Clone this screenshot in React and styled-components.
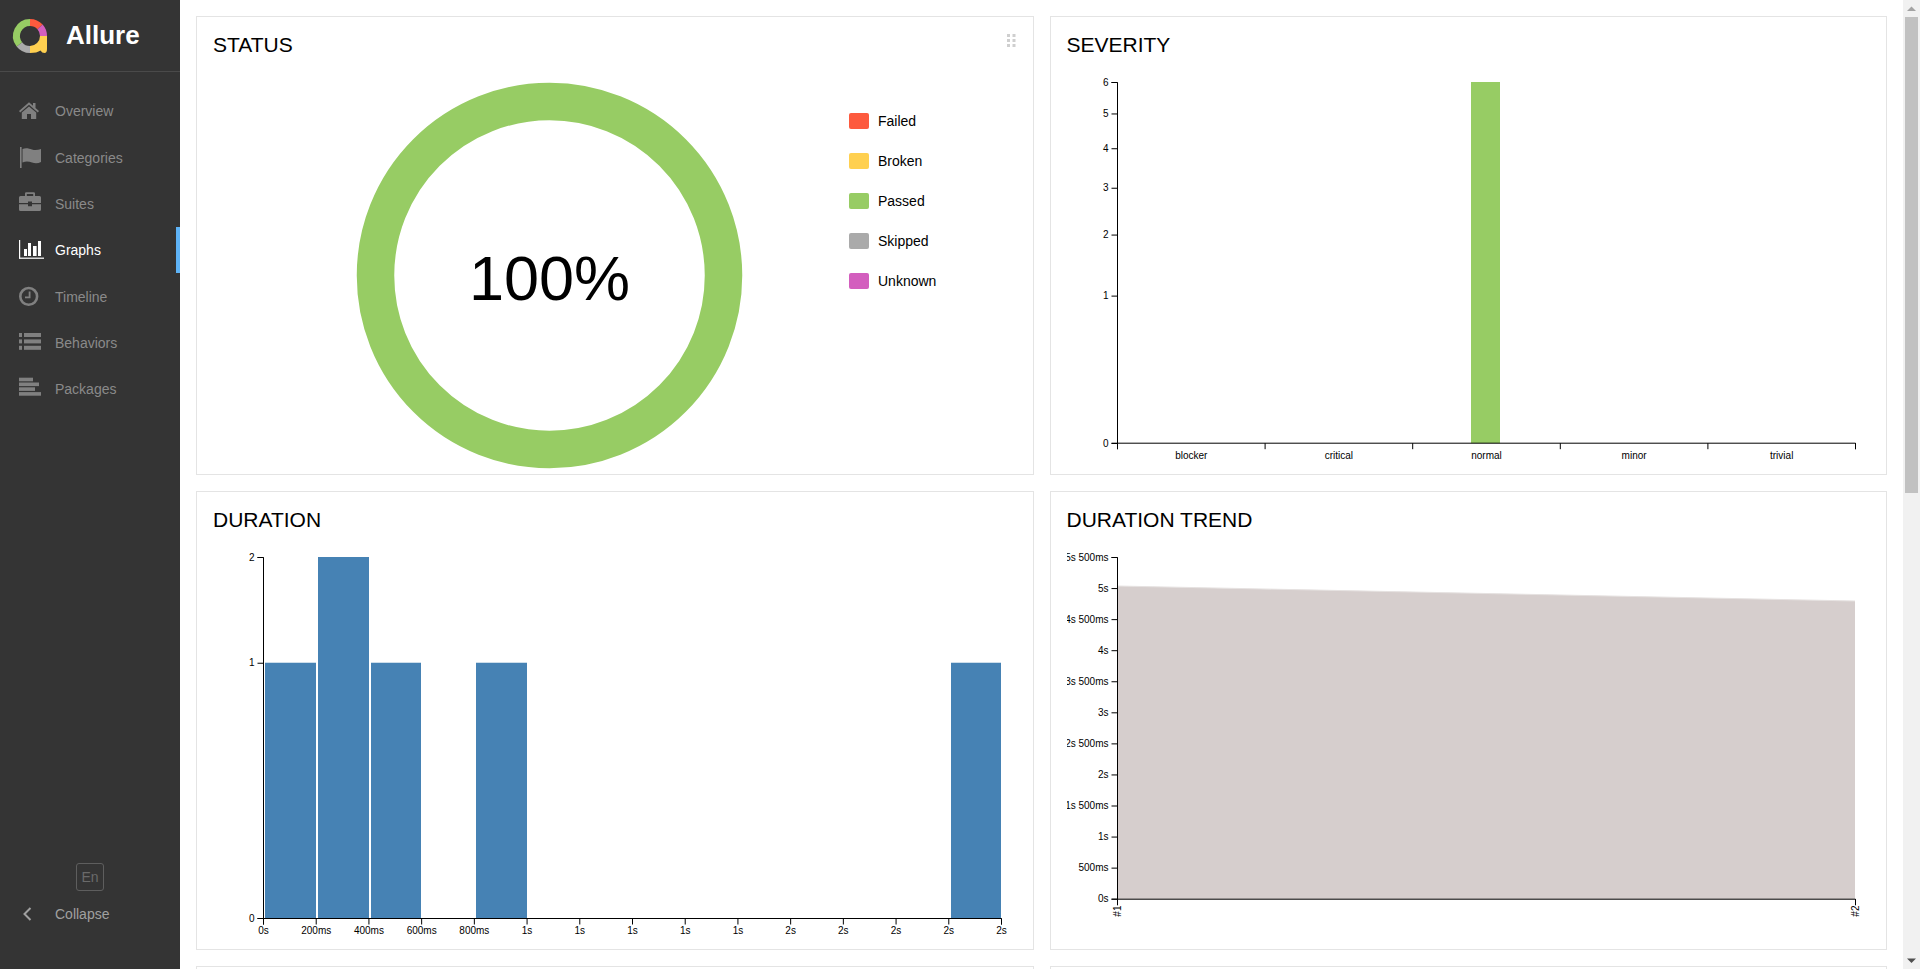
import React from "react";
import styled, { createGlobalStyle } from "styled-components";

const navItems = [
  { label: "Overview", icon: "home" },
  { label: "Categories", icon: "flag" },
  { label: "Suites", icon: "briefcase" },
  { label: "Graphs", icon: "chart", active: true },
  { label: "Timeline", icon: "clock" },
  { label: "Behaviors", icon: "list" },
  { label: "Packages", icon: "lines" },
];

const legend = [
  { label: "Failed", color: "#fd5a3e" },
  { label: "Broken", color: "#ffd050" },
  { label: "Passed", color: "#97cc64" },
  { label: "Skipped", color: "#aaaaaa" },
  { label: "Unknown", color: "#d35ebe" },
];

const AXIS_LEFT = 50.5;
const AXIS_RIGHT = 788.5;
const AXIS_TOP = 10.5;
const AXIS_HEIGHT = 361;

const sqrtY = (value, max) =>
  AXIS_TOP + AXIS_HEIGHT * (1 - Math.sqrt(value / max));

const severityLabels = ["blocker", "critical", "normal", "minor", "trivial"];
const durationLabels = ["0s", "200ms", "400ms", "600ms", "800ms", "1s", "1s", "1s", "1s", "1s", "2s", "2s", "2s", "2s", "2s"];
const durationBars = [
  { x: 52, w: 51, top: 1 },
  { x: 105, w: 51, top: 2 },
  { x: 158, w: 50, top: 1 },
  { x: 263, w: 51, top: 1 },
  { x: 738, w: 50, top: 1 },
];
const trendLabels = ["0s", "500ms", "1s", "1s 500ms", "2s", "2s 500ms", "3s", "3s 500ms", "4s", "4s 500ms", "5s", "5s 500ms"];

const polar = (r, deg) => {
  const a = ((deg - 90) * Math.PI) / 180;
  return `${30 + r * Math.cos(a)} ${36 + r * Math.sin(a)}`;
};
const arc = (from, to) => `M${polar(13.5, from)} A13.5 13.5 0 ${to - from > 180 ? 1 : 0} 1 ${polar(13.5, to)}`;

const Logo = () => (
  <LogoSvg viewBox="10 16 40 40">
    <g fill="none" strokeWidth="7">
      <path d={arc(0, 48)} stroke="#fd5a3e" />
      <path d={arc(48, 90)} stroke="#d35ebe" />
      <path d={arc(180, 232)} stroke="#aaaaaa" />
      <path d={arc(232, 360)} stroke="#97cc64" />
    </g>
    <path
      d="M47 36 V49 Q47 53 44.5 53 Q42 53 40.5 50.5 Q37 53 30 53 V46 A10 10 0 0 0 40 36 Z"
      fill="#ffd050"
    />
  </LogoSvg>
);

const NavIcon = ({ name }) => {
  if (name === "home") {
    return (
      <IconSvg viewBox="0 0 24 24">
        <path d="M12 3.2 L2 12 L3.2 13.4 L12 5.8 L20.8 13.4 L22 12 L18.5 9 V4 H16 V6.7 Z" />
        <path d="M12 7.4 L4.8 13.6 V20 H10 V15 H14 V20 H19.2 V13.6 Z" />
      </IconSvg>
    );
  }
  if (name === "flag") {
    return (
      <IconSvg viewBox="0 0 24 24">
        <rect x="3" y="1" width="1.6" height="21" />
        <path d="M5.5 3 C9 1.5 12 2.5 15 3.5 C18 4.5 21 4 24 3 V16 C21 17.5 18 17.5 15 16.5 C12 15.5 9 15 5.5 16.5 Z" />
      </IconSvg>
    );
  }
  if (name === "briefcase") {
    return (
      <IconSvg viewBox="0 1 24 24">
        <path d="M8 5 V2.5 Q8 1.2 9.3 1.2 H16.7 Q18 1.2 18 2.5 V5 H16.2 V3 H9.8 V5 Z" />
        <path d="M2 6.5 Q2 5 3.5 5 H22.5 Q24 5 24 6.5 V12 H15 V10.5 H11 V12 H2 Z" />
        <path d="M2 13.3 H11 V15.2 H15 V13.3 H24 V18.5 Q24 20 22.5 20 H3.5 Q2 20 2 18.5 Z" />
      </IconSvg>
    );
  }
  if (name === "chart") {
    return (
      <IconSvg viewBox="0 0 24 24" $active>
        <rect x="2" y="2" width="1.2" height="18.5" />
        <rect x="2" y="19.6" width="25" height="1.2" />
        <rect x="7" y="11" width="3" height="7" />
        <rect x="11" y="5" width="3" height="13" />
        <rect x="16" y="8" width="3.6" height="10" />
        <rect x="21" y="3" width="3" height="15" />
      </IconSvg>
    );
  }
  if (name === "clock") {
    return (
      <IconSvg viewBox="0 0 24 24">
        <circle cx="11.7" cy="11.4" r="8.4" fill="none" stroke="#808080" strokeWidth="2.6" />
        <path d="M12.6 6.4 V12.4 H8" fill="none" stroke="#808080" strokeWidth="1.8" />
      </IconSvg>
    );
  }
  if (name === "list") {
    return (
      <IconSvg viewBox="0 0 24 24">
        {[2, 8.4, 14.8].map((y) => (
          <g key={y}>
            <rect x="2" y={y} width="3" height="4" />
            <rect x="7" y={y} width="17" height="4" />
          </g>
        ))}
      </IconSvg>
    );
  }
  return (
    <IconSvg viewBox="0 0 24 24">
      <rect x="2" y="0.7" width="14" height="3.6" />
      <rect x="2" y="5.5" width="20" height="3.6" />
      <rect x="2" y="10.3" width="16" height="3.6" />
      <rect x="2" y="15.1" width="22" height="3.6" />
    </IconSvg>
  );
};

const LeftAxis = ({ ticks, bottom }) => (
  <g>
    <Domain d={`M${AXIS_LEFT - 6} ${AXIS_TOP} H${AXIS_LEFT} V${bottom} H${AXIS_LEFT - 6}`} />
    {ticks.map((tick) => (
      <g key={tick.label}>
        <Tick x1={AXIS_LEFT - 6} x2={AXIS_LEFT} y1={tick.y} y2={tick.y} />
        <AxisText x={AXIS_LEFT - 9} y={tick.y} dy=".32em" textAnchor="end">
          {tick.label}
        </AxisText>
      </g>
    ))}
  </g>
);

const BottomAxis = ({ y, ticks }) => (
  <g>
    <Domain d={`M${AXIS_LEFT} ${y + 6} V${y} H${AXIS_RIGHT} V${y + 6}`} />
    {ticks.map((x) => (
      <Tick key={x} x1={x} x2={x} y1={y} y2={y + 6} />
    ))}
  </g>
);

const StatusChart = () => (
  <StatusBody>
    <DonutSvg>
      <circle cx="336.5" cy="203.5" r="174" fill="none" stroke="#97cc64" strokeWidth="37.5" />
      <DonutText x="336.5" y="228" textAnchor="middle">100%</DonutText>
    </DonutSvg>
    <Legend>
      {legend.map((item) => (
        <LegendRow key={item.label}>
          <Swatch $color={item.color} />
          {item.label}
        </LegendRow>
      ))}
    </Legend>
  </StatusBody>
);

const SeverityChart = () => {
  const band = (AXIS_RIGHT - AXIS_LEFT) / 5;
  const ticks = [6, 5, 4, 3, 2, 1, 0].map((v) => ({ label: String(v), y: sqrtY(v, 6) }));
  return (
    <ChartSvg>
      <rect x="404" y="10" width="29" height="361.2" fill="#97cc64" />
      <LeftAxis ticks={ticks} bottom={371.2} />
      <BottomAxis y={371.2} ticks={[0, 1, 2, 3, 4, 5].map((i) => AXIS_LEFT + band * i)} />
      {severityLabels.map((label, i) => (
        <AxisText key={label} x={AXIS_LEFT + band * (i + 0.5)} y="380" dy=".71em" textAnchor="middle">
          {label}
        </AxisText>
      ))}
    </ChartSvg>
  );
};

const DurationChart = () => {
  const step = (AXIS_RIGHT - AXIS_LEFT) / 14;
  const ticks = [2, 1, 0].map((v) => ({ label: String(v), y: sqrtY(v, 2) }));
  return (
    <ChartSvg>
      {durationBars.map((bar) => (
        <rect
          key={bar.x}
          x={bar.x}
          y={sqrtY(bar.top, 2) - 0.5}
          width={bar.w}
          height={371.5 - sqrtY(bar.top, 2) + 0.5}
          fill="#4682b4"
        />
      ))}
      <LeftAxis ticks={ticks} bottom={371.5} />
      <BottomAxis y={371.5} ticks={durationLabels.map((_, i) => AXIS_LEFT + step * i)} />
      {durationLabels.map((label, i) => (
        <AxisText key={i} x={AXIS_LEFT + step * i} y="380" dy=".71em" textAnchor="middle">
          {label}
        </AxisText>
      ))}
    </ChartSvg>
  );
};

const DurationTrendChart = () => {
  const bottom = 352.2;
  const pitch = (bottom - AXIS_TOP) / 11;
  const ticks = trendLabels.map((label, i) => ({ label, y: bottom - pitch * i }));
  return (
    <ChartSvg>
      <path d={`M${AXIS_LEFT} 39 L788 54 V${bottom} H${AXIS_LEFT} Z`} fill="#d6cecd" />
      <path d={`M${AXIS_LEFT} 39 L788 54`} stroke="#e6e2e1" fill="none" />
      <LeftAxis ticks={ticks} bottom={bottom} />
      <BottomAxis y={bottom} ticks={[AXIS_LEFT, AXIS_RIGHT]} />
      {["#1", "#2"].map((label, i) => (
        <AxisText
          key={label}
          transform={`translate(${(i ? AXIS_RIGHT : AXIS_LEFT) + 3.5} 358.5) rotate(-90)`}
          textAnchor="end"
        >
          {label}
        </AxisText>
      ))}
    </ChartSvg>
  );
};

const App = () => {
  return (
    <Page>
      <GlobalStyle />
      <SideNav>
        <Brand>
          <Logo />
          <BrandName>Allure</BrandName>
        </Brand>
        <Menu>
          {navItems.map((item) => (
            <MenuItem key={item.label} $active={item.active}>
              <NavIcon name={item.icon} />
              {item.label}
            </MenuItem>
          ))}
        </Menu>
        <Footer>
          <LangButton>En</LangButton>
          <Collapse>
            <CollapseIcon viewBox="0 0 24 24">
              <path d="M11.5 6 L5.5 12 L11.5 18" />
            </CollapseIcon>
            Collapse
          </Collapse>
        </Footer>
      </SideNav>
      <Content>
        <Card>
          <CardTitle>Status</CardTitle>
          <Handle viewBox="0 0 9 13">
            {[0, 5, 10].map((y) => (
              <g key={y}>
                <rect x="0" y={y} width="3" height="3" />
                <rect x="5.5" y={y} width="3" height="3" />
              </g>
            ))}
          </Handle>
          <StatusChart />
        </Card>
        <Card>
          <CardTitle>Severity</CardTitle>
          <SeverityChart />
        </Card>
        <Card>
          <CardTitle>Duration</CardTitle>
          <DurationChart />
        </Card>
        <Card>
          <CardTitle>Duration trend</CardTitle>
          <DurationTrendChart />
        </Card>
        <Card>
          <CardTitle>Retries trend</CardTitle>
          <EmptyChart $height={400} />
        </Card>
        <Card>
          <CardTitle>Categories trend</CardTitle>
          <EmptyChart $height={400} />
        </Card>
        <Card>
          <CardTitle>History trend</CardTitle>
          <EmptyChart $height={387} />
        </Card>
        <Card>
          <CardTitle>Executors</CardTitle>
          <EmptyChart $height={387} />
        </Card>
      </Content>
      <ScrollRail>
        <ScrollButton viewBox="0 0 17 17" $color="#a3a3a3">
          <path d="M4 11 L8.5 6.5 L13 11 Z" />
        </ScrollButton>
        <ScrollThumb />
        <ScrollButton viewBox="0 0 17 17" $color="#505050" $bottom>
          <path d="M4 6.5 L13 6.5 L8.5 11 Z" />
        </ScrollButton>
      </ScrollRail>
    </Page>
  );
};

const GlobalStyle = createGlobalStyle`
  html {
    scrollbar-width: none;
  }
  body {
    margin: 0;
    background: #fff;
    color: #000;
    font-family: "Liberation Sans", Arial, sans-serif;
    font-size: 14px;
  }
`;

const Page = styled.div`
  display: flex;
  align-items: flex-start;
`;

const SideNav = styled.nav`
  position: sticky;
  top: 0;
  flex: 0 0 180px;
  height: 100vh;
  display: flex;
  flex-direction: column;
  background: #343434;
  color: #808080;
`;

const Brand = styled.div`
  display: flex;
  align-items: center;
  height: 71px;
  padding-left: 10px;
  gap: 16px;
  border-bottom: 1px solid #4a4a4a;
`;

const LogoSvg = styled.svg`
  width: 40px;
  height: 40px;
  flex: none;
`;

const BrandName = styled.span`
  color: #fff;
  font-size: 26px;
  font-weight: bold;
`;

const Menu = styled.div`
  margin-top: 16.1px;
`;

const MenuItem = styled.div`
  display: flex;
  align-items: center;
  gap: 14px;
  height: 46.33px;
  padding-left: 17px;
  box-sizing: border-box;
  color: ${(props) => (props.$active ? "#fff" : "#8a8a8a")};
  border-right: 4px solid ${(props) => (props.$active ? "#5eb3f6" : "transparent")};
`;

const IconSvg = styled.svg`
  width: 24px;
  height: 24px;
  flex: none;
  overflow: visible;
  fill: ${(props) => (props.$active ? "#fff" : "#808080")};
`;

const Footer = styled.div`
  margin-top: auto;
  padding-bottom: 32px;
`;

const LangButton = styled.div`
  box-sizing: border-box;
  width: 28px;
  height: 28px;
  margin: 0 auto;
  display: flex;
  align-items: center;
  justify-content: center;
  border: 1px solid #5e5e5e;
  border-radius: 3px;
  color: #6a6a6a;
`;

const Collapse = styled.div`
  display: flex;
  align-items: center;
  gap: 14px;
  height: 46px;
  padding-left: 17px;
  color: #a0a0a0;
`;

const CollapseIcon = styled.svg`
  width: 24px;
  height: 24px;
  flex: none;
  fill: none;
  stroke: #a0a0a0;
  stroke-width: 2;
  transform: translateX(2px);
`;

const Content = styled.main`
  flex: 1;
  min-width: 0;
  display: grid;
  grid-template-columns: 1fr 1fr;
  gap: 16px;
  padding: 16px;
`;

const Card = styled.section`
  position: relative;
  border: 1px solid #e4e4e4;
  padding: 16px 16px 2px;
  min-width: 0;
`;

const CardTitle = styled.h2`
  margin: 0 0 15px;
  font-size: 21px;
  font-weight: normal;
  line-height: 24px;
  text-transform: uppercase;
`;

const Handle = styled.svg`
  position: absolute;
  top: 17px;
  right: 17px;
  width: 9px;
  height: 13px;
  fill: #cfcfcf;
`;

const ChartSvg = styled.svg`
  display: block;
  width: 100%;
  height: 400px;
`;

const EmptyChart = styled.div`
  height: ${(props) => props.$height}px;
`;

const StatusBody = styled.div`
  display: flex;
  height: 400px;
`;

const DonutSvg = styled.svg`
  flex: 0 0 636px;
  height: 400px;
`;

const DonutText = styled.text`
  font-size: 63px;
  fill: #000;
`;

const Legend = styled.div`
  padding-top: 29px;
`;

const LegendRow = styled.div`
  display: flex;
  align-items: center;
  gap: 9px;
  height: 40px;
`;

const Swatch = styled.span`
  width: 20px;
  height: 16px;
  border-radius: 2px;
  background: ${(props) => props.$color};
`;

const Domain = styled.path`
  fill: none;
  stroke: #000;
`;

const Tick = styled.line`
  stroke: #000;
`;

const AxisText = styled.text`
  font-size: 10px;
  fill: #000;
`;

const ScrollRail = styled.aside`
  position: sticky;
  top: 0;
  flex: 0 0 17px;
  height: 100vh;
  display: flex;
  flex-direction: column;
  background: #f1f1f1;
`;

const ScrollButton = styled.svg`
  width: 17px;
  height: 17px;
  flex: none;
  fill: ${(props) => props.$color};
  margin-top: ${(props) => (props.$bottom ? "auto" : "0")};
`;

const ScrollThumb = styled.div`
  height: 476px;
  margin: 0 2px;
  background: #c1c1c1;
`;

export default App;
